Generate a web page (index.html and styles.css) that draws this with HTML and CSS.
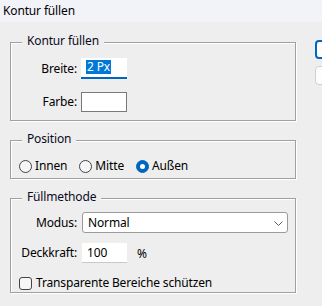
FILE: index.html
```html
<!DOCTYPE html>
<html lang="de">
<head>
<meta charset="utf-8">
<title>Kontur füllen</title>
<link rel="stylesheet" href="styles.css">
</head>
<body>
<div class="titlebar">Kontur füllen</div>
<div class="main">
  <div class="groups">
    <div class="group g1">
      <div class="legend">Kontur füllen</div>
      <div class="form f1">
        <span class="lbl">Breite:</span>
        <div class="field-width"><span class="sel">2 Px</span></div>
        <span class="lbl">Farbe:</span>
        <div class="swatch"></div>
      </div>
    </div>
    <div class="group g2">
      <div class="legend">Position</div>
      <div class="radios">
        <span class="radio"><span class="circle"></span>Innen</span>
        <span class="radio"><span class="circle"></span>Mitte</span>
        <span class="radio"><span class="circle checked"></span>Außen</span>
      </div>
    </div>
    <div class="group g3">
      <div class="legend">Füllmethode</div>
      <div class="form f3">
        <span class="lbl">Modus:</span>
        <div class="select"><span>Normal</span>
          <svg class="chev" width="9" height="5" viewBox="0 0 9 5"><path d="M0.5 0.5 L4.5 4.5 L8.5 0.5" fill="none" stroke="#5a5a5a" stroke-width="1"/></svg>
        </div>
        <span class="lbl">Deckkraft:</span>
        <div class="numrow"><div class="num">100</div><span class="pct">%</span></div>
      </div>
      <div class="check"><span class="box"></span>Transparente Bereiche schützen</div>
    </div>
  </div>
  <div class="buttons">
    <div class="btn primary"></div>
    <div class="btn"></div>
  </div>
</div>
</body>
</html>
```
FILE: styles.css
```css
html, body {
  margin: 0;
  padding: 0;
  overflow: hidden;
  width: 322px;
  height: 306px;
}
body {
  background: #eeeeee;
  font-family: "Noto Sans", "Open Sans", sans-serif;
  font-size: 12px;
  letter-spacing: -0.15px;
  color: #000;
}
.titlebar {
  height: 22px;
  line-height: 21px;
  padding-left: 3px;
  background: #f2f3f8;
}
.main {
  display: flex;
  align-items: flex-start;
}
.groups {
  margin-left: 10px;
  width: 286px;
  flex: none;
}
.group {
  border: 1px solid #a0a0a0;
  box-shadow: 1px 1px 0 #fff, inset 1px 1px 0 #fff;
  margin-top: 19px;
}
.g1 { margin-top: 20px; padding-bottom: 8px; }
.legend {
  display: table;
  margin: -10px 0 0 11px;
  padding: 0 5px;
  line-height: 16px;
  background: #eeeeee;
  color: #0a0a1e;
}
.form {
  display: grid;
  grid-template-columns: 66px auto;
  column-gap: 4px;
  align-items: center;
  justify-items: start;
}
.lbl {
  justify-self: end;
  line-height: 16px;
}
.f1 {
  margin-top: 9px;
  row-gap: 13px;
}
.field-width {
  width: 46px;
  height: 19px;
  background: #fff;
  border-bottom: 2px solid #0067c0;
  box-sizing: content-box;
}
.sel {
  display: inline-block;
  margin: 1px 0 0 5px;
  padding: 0 1px;
  line-height: 14px;
  background: #0078d7;
  color: #fff;
}
.swatch {
  width: 44px;
  height: 18px;
  background: #fff;
  border: 1px solid #7a7a7a;
}
.radios {
  display: flex;
  margin: 11px 0 0 8px;
  padding-bottom: 4px;
  line-height: 16px;
}
.radio {
  display: flex;
  align-items: center;
  margin-right: 12px;
}
.circle {
  width: 11px;
  height: 11px;
  border: 1px solid #444;
  border-radius: 50%;
  background: #f6f6f6;
  margin-right: 3px;
  position: relative;
}
.circle.checked {
  border-color: #0067c0;
  background: #0067c0;
}
.circle.checked::after {
  content: "";
  position: absolute;
  left: 3px;
  top: 3px;
  width: 5px;
  height: 5px;
  border-radius: 50%;
  background: #fff;
}
.f3 {
  margin-top: 7px;
  row-gap: 10px;
  grid-template-columns: 66px 1fr;
  padding-right: 7px;
}
.select {
  justify-self: stretch;
  margin-left: 1px;
  height: 19px;
  border: 1px solid #9a9a9a;
  border-radius: 3px;
  background: #fff;
  display: flex;
  align-items: center;
  justify-content: space-between;
  padding: 0 4px 0 5px;
}
.chev { margin-top: 1px; }
.numrow {
  display: flex;
  align-items: center;
  margin-left: 1px;
}
.num {
  width: 40px;
  height: 19px;
  line-height: 19px;
  padding-left: 5px;
  background: #fff;
  border-bottom: 1px solid #c8c8c8;
}
.pct {
  margin-left: 10px;
}
.check {
  display: flex;
  align-items: center;
  margin: 12px 0 0 8px;
  padding-bottom: 1px;
  line-height: 16px;
}
.box {
  width: 11px;
  height: 11px;
  border: 1px solid #444;
  border-radius: 3px;
  background: #f6f6f6;
  margin-right: 4px;
}
.buttons {
  margin-left: 19px;
  margin-top: 18px;
  width: 7px;
  overflow: hidden;
  display: flex;
  flex-direction: column;
  gap: 7px;
  flex: none;
}
.btn {
  width: 75px;
  flex: none;
  height: 17px;
  border: 1px solid #d0d0d0;
  border-radius: 4px;
  background: #fdfdfd;
}
.btn.primary {
  border: 2px solid #0067c0;
  height: 15px;
}
```
